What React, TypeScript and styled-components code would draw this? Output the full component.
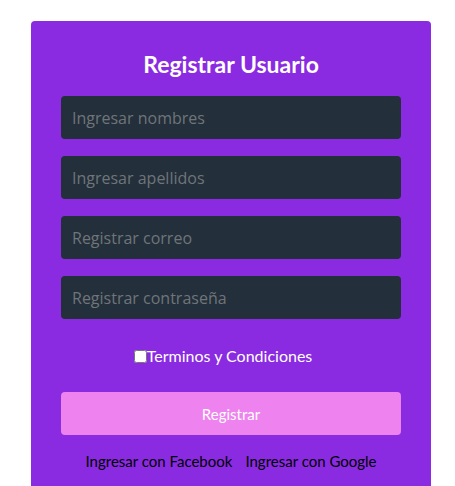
import React from "react";
import styled, { createGlobalStyle } from "styled-components";

const Global = createGlobalStyle`
  html, body { margin: 0; padding: 0; background: #ffffff; overflow: hidden; }
  * { box-sizing: border-box; }
`;

const Page = styled.div`
  padding: 21px 0 0 31px;
  font-family: Lato, "Open Sans", sans-serif;
`;

const Card = styled.form`
  width: 400px;
  min-height: 500px;
  background: #8a2be2;
  border-radius: 4px;
  padding: 30px 30px 0;
  display: flex;
  flex-direction: column;
  align-items: stretch;
`;

const Title = styled.h2`
  margin: 0 0 19px;
  font-size: 23px;
  line-height: 26px;
  font-weight: 700;
  color: #ffffff;
  text-align: center;
`;

const Fields = styled.div`
  display: flex;
  flex-direction: column;
  gap: 17px;
`;

const Input = styled.input`
  height: 43px;
  width: 100%;
  border: none;
  border-radius: 4px;
  background: #232f3b;
  padding: 0 11px;
  font-family: "Open Sans", sans-serif;
  font-size: 16px;
  color: #ffffff;
  outline: none;
  &::placeholder { color: #6f7579; }
`;

const Terms = styled.label`
  margin-top: 27px;
  padding-right: 16px;
  height: 20px;
  display: flex;
  align-items: center;
  justify-content: center;
  color: #ffffff;
  font-size: 16px;
  line-height: 20px;
`;

const Check = styled.input`
  margin: 0;
  width: 13px;
  height: 13px;
`;

const Button = styled.button`
  margin-top: 26px;
  height: 43px;
  border: none;
  border-radius: 4px;
  background: #ee82ee;
  color: #ffffff;
  font-family: Lato, sans-serif;
  font-size: 15px;
`;

const Links = styled.div`
  margin-top: 16px;
  display: flex;
  justify-content: center;
  gap: 13px;
  font-size: 15px;
  line-height: 20px;
`;

const Link = styled.a`
  color: #000000;
  text-decoration: none;
`;

const Footer = styled.p`
  margin: 10px 0 0;
  text-align: center;
  color: #ffffff;
  font-size: 16px;
  line-height: 20px;
`;

export default function App() {
  return (
    <Page>
      <Global />
      <Card onSubmit={(e) => e.preventDefault()}>
        <Title>Registrar Usuario</Title>
        <Fields>
          <Input placeholder="Ingresar nombres" />
          <Input placeholder="Ingresar apellidos" />
          <Input placeholder="Registrar correo" />
          <Input placeholder="Registrar contraseña" type="password" />
        </Fields>
        <Terms>
          <Check type="checkbox" />
          Terminos y Condiciones
        </Terms>
        <Button type="submit">Registrar</Button>
        <Links>
          <Link href="#">Ingresar con Facebook</Link>
          <Link href="#">Ingresar con Google</Link>
        </Links>
        <Footer>Ya tienes cuenta? Ingresa</Footer>
      </Card>
    </Page>
  );
}
